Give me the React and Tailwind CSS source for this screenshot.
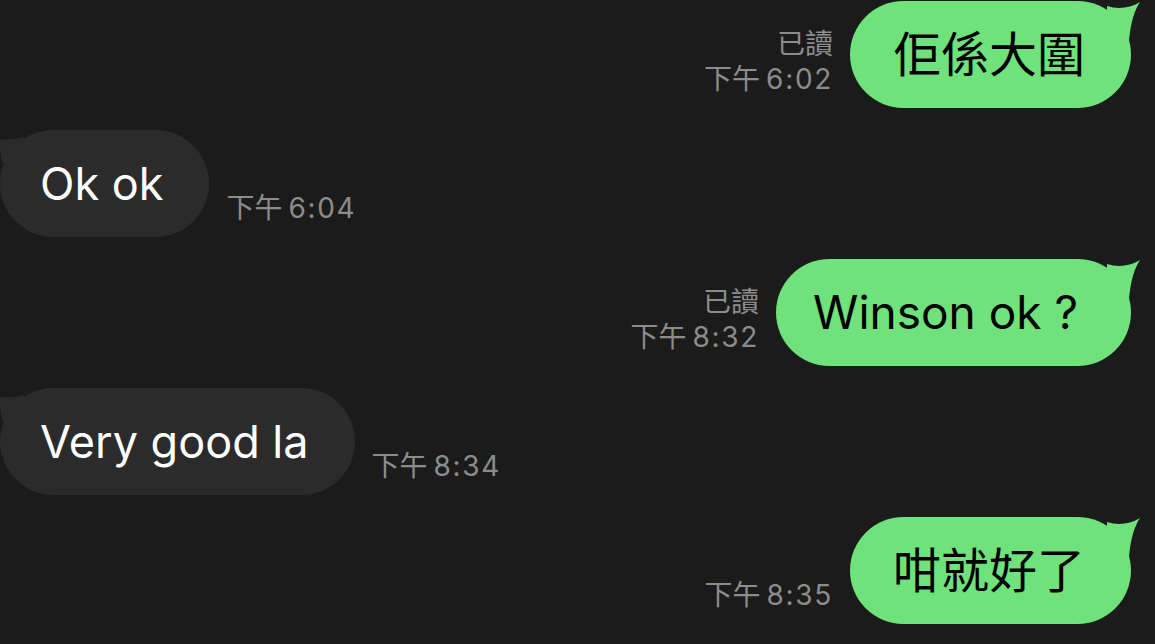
import React from "react";

const messages = [
  { id: 1, mine: true, text: "佢係大圍", cjk: true, time: "6:02", read: true },
  { id: 2, mine: false, text: "Ok ok", time: "6:04" },
  { id: 3, mine: true, text: "Winson ok ?", time: "8:32", read: true },
  { id: 4, mine: false, text: "Very good la", time: "8:34" },
  { id: 5, mine: true, text: "咁就好了", cjk: true, time: "8:35", read: false },
];

const font = { fontFamily: "Inter, 'Noto Sans CJK TC', sans-serif" };

function TailRight() {
  return (
    <svg className="absolute -right-[10px] top-[1px]" width="34" height="40" viewBox="0 0 34 40">
      <path d="M0 4 C10 7 22 7 33 0 C28 8 24 18 22 40 L0 40 Z" fill="#6fe27b" />
    </svg>
  );
}

function TailLeft() {
  return (
    <svg className="absolute -left-[6px] top-[3px]" width="30" height="30" viewBox="0 0 30 30">
      <path d="M30 4 C20 6 10 8 0 5 C5 10 7 16 8 30 L30 30 Z" fill="#2b2b2b" />
    </svg>
  );
}

function Meta({ time, read, align }) {
  return (
    <div className={`flex flex-col mb-[11px] text-[28px] leading-[35px] text-[#8c8c8c] ${align}`}>
      {read && <span>已讀</span>}
      <span className="whitespace-nowrap">
        下午<span className="ml-[6px] tracking-[0.06em]">{time}</span>
      </span>
    </div>
  );
}

export default function App() {
  return (
    <div className="w-[1155px] h-[644px] overflow-hidden bg-[#1b1b1b]" style={font}>
      <div className="flex flex-col gap-[22px] pt-[1px] pr-[24px]">
        {messages.map((m) =>
          m.mine ? (
            <div key={m.id} className="flex justify-end items-end gap-[17px]">
              <Meta time={m.time} read={m.read} align="items-end" />
              <div
                className={`relative h-[107px] rounded-full bg-[#6fe27b] flex items-center ${
                  m.cjk ? "pl-[43px] pr-[46px]" : "pl-[37px] pr-[53px]"
                }`}
              >
                <TailRight />
                <span className={`relative text-black whitespace-nowrap ${m.cjk ? "text-[48px]" : "text-[46px]"}`}>
                  {m.text}
                </span>
              </div>
            </div>
          ) : (
            <div key={m.id} className="flex justify-start items-end gap-[17px]">
              <div className="relative h-[107px] rounded-full bg-[#2b2b2b] pl-[40px] pr-[46px] flex items-center">
                <TailLeft />
                <span className="relative text-[45px] text-white whitespace-nowrap">{m.text}</span>
              </div>
              <Meta time={m.time} align="items-start" />
            </div>
          )
        )}
      </div>
    </div>
  );
}
